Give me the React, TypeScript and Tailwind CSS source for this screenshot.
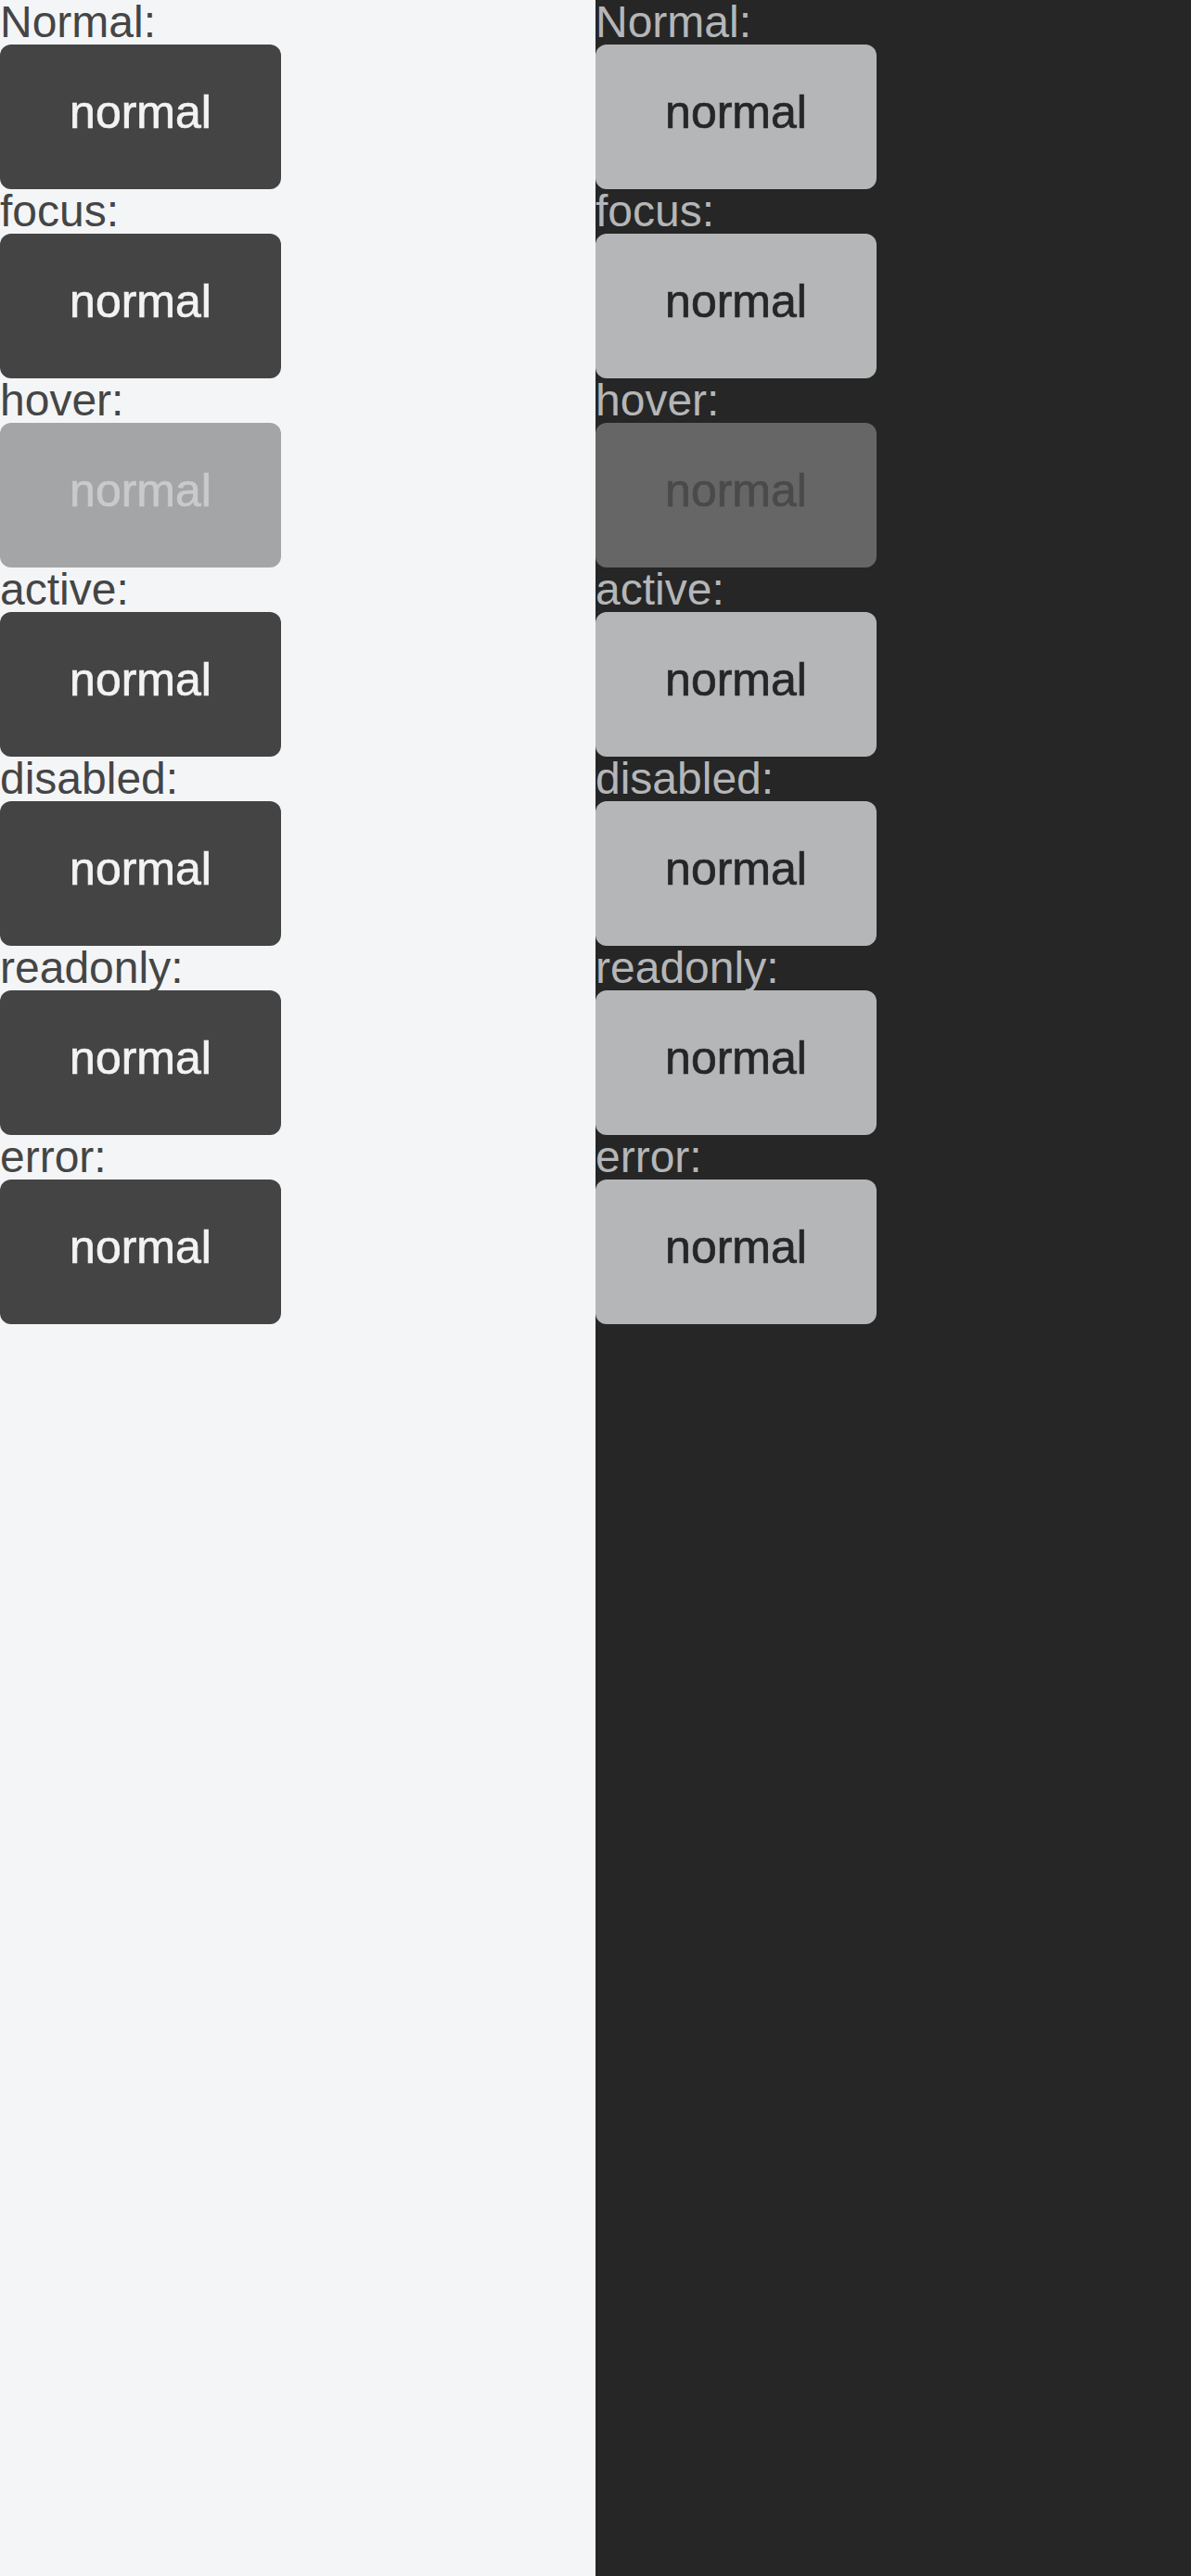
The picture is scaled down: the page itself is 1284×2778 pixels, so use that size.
const states = ['Normal', 'focus', 'hover', 'active', 'disabled', 'readonly', 'error']

function Column({ dark }: { dark: boolean }) {
  return (
    <div className={`flex flex-col ${dark ? 'bg-[#262626] text-[#b5b6b8]' : 'bg-[#f4f5f7] text-[#454545]'}`}>
      {states.map((state) => {
        const hover = state === 'hover'
        let btn = dark ? 'bg-[#b5b6b8] text-[#262626]' : 'bg-[#444444] text-[#f3f3f3]'
        if (hover) btn = dark ? 'bg-[#666666] text-[#4a4a4a]' : 'bg-[#a4a5a7] text-[#c9cacc]'
        return (
          <div key={state} className="flex flex-col">
            <div className="text-[48px] leading-[48px] h-[48px]">{state}:</div>
            <button
              type="button"
              className={`w-[303px] h-[156px] pb-[10px] rounded-[12px] flex items-center justify-center text-[50px] leading-none [-webkit-text-stroke:0.7px_currentColor] ${btn}`}
            >
              normal
            </button>
          </div>
        )
      })}
    </div>
  )
}

export default function App() {
  return (
    <div className="grid grid-cols-2 min-h-screen" style={{ fontFamily: '"Liberation Sans", Arial, sans-serif' }}>
      <Column dark={false} />
      <Column dark={true} />
    </div>
  )
}
